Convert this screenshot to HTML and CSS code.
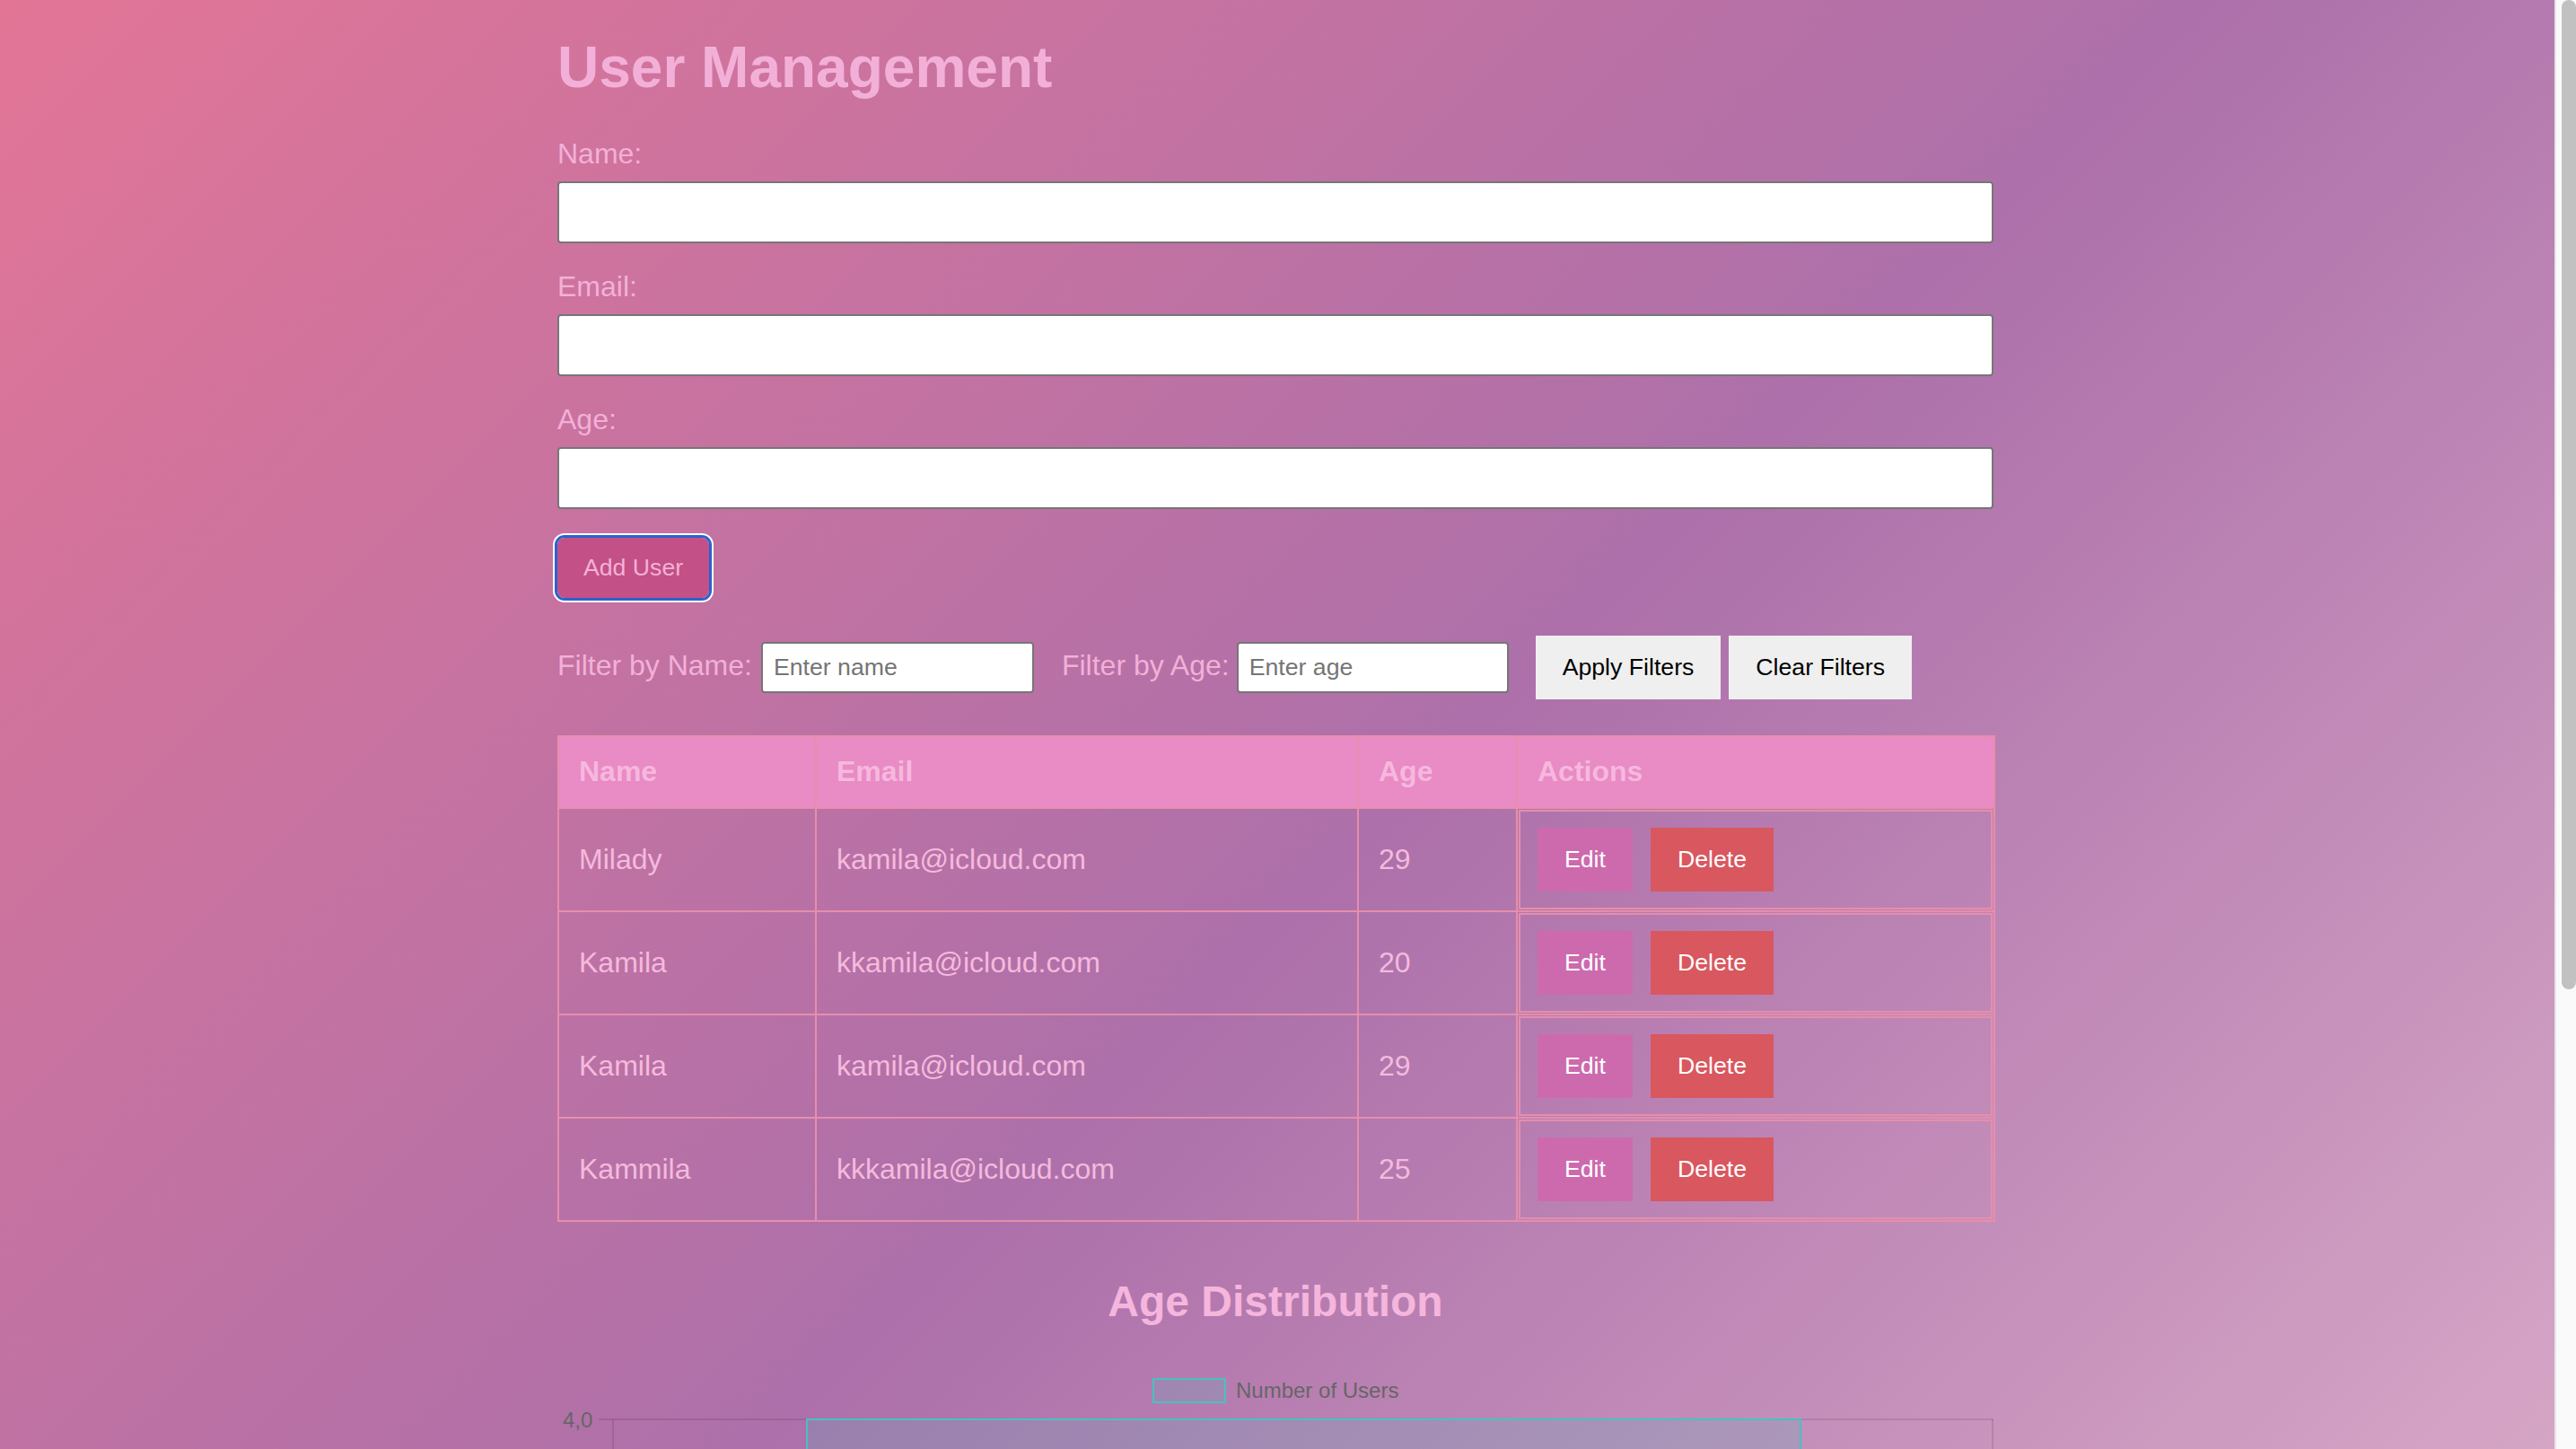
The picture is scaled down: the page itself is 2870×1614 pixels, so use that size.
FILE: index.html
```html
<!DOCTYPE html>
<html lang="en">
<head>
<meta charset="utf-8">
<title>User Management</title>
<link rel="stylesheet" href="styles.css">
</head>
<body>
<div class="container">
  <h1 class="title">User Management</h1>

  <form class="user-form">
    <div class="field">
      <label class="field-label" for="name">Name:</label>
      <input class="field-input" id="name" type="text">
    </div>
    <div class="field">
      <label class="field-label" for="email">Email:</label>
      <input class="field-input" id="email" type="email">
    </div>
    <div class="field">
      <label class="field-label" for="age">Age:</label>
      <input class="field-input" id="age" type="number">
    </div>
    <button type="button" class="add-btn">Add User</button>
  </form>

  <div class="filters">
    <label class="filter-label filter-label-name" for="fname">Filter by Name:</label>
    <input class="filter-input filter-input-name" id="fname" type="text" placeholder="Enter name">
    <label class="filter-label filter-label-age" for="fage">Filter by Age:</label>
    <input class="filter-input filter-input-age" id="fage" type="number" placeholder="Enter age">
    <button type="button" class="light-btn apply-btn">Apply Filters</button>
    <button type="button" class="light-btn">Clear Filters</button>
  </div>

  <table class="users">
    <colgroup>
      <col class="col-name">
      <col class="col-email">
      <col class="col-age">
      <col class="col-actions">
    </colgroup>
    <thead>
      <tr><th>Name</th><th>Email</th><th>Age</th><th>Actions</th></tr>
    </thead>
    <tbody>
      <tr>
        <td>Milady</td><td>kamila@icloud.com</td><td>29</td>
        <td class="actions"><div class="actions-box"><button type="button" class="edit-btn">Edit</button><button type="button" class="delete-btn">Delete</button></div></td>
      </tr>
      <tr>
        <td>Kamila</td><td>kkamila@icloud.com</td><td>20</td>
        <td class="actions"><div class="actions-box"><button type="button" class="edit-btn">Edit</button><button type="button" class="delete-btn">Delete</button></div></td>
      </tr>
      <tr>
        <td>Kamila</td><td>kamila@icloud.com</td><td>29</td>
        <td class="actions"><div class="actions-box"><button type="button" class="edit-btn">Edit</button><button type="button" class="delete-btn">Delete</button></div></td>
      </tr>
      <tr>
        <td>Kammila</td><td>kkkamila@icloud.com</td><td>25</td>
        <td class="actions"><div class="actions-box"><button type="button" class="edit-btn">Edit</button><button type="button" class="delete-btn">Delete</button></div></td>
      </tr>
    </tbody>
  </table>

  <h2 class="chart-title">Age Distribution</h2>

  <div class="chart">
    <svg class="chart-svg" width="1600" height="800" viewBox="0 0 1600 800">
      <rect x="664" y="37" width="80" height="26" fill="rgba(75,192,192,0.2)" stroke="rgb(75,192,192)" stroke-width="2"/>
      <text class="chart-text" x="756" y="58">Number of Users</text>

      <g stroke="rgba(0,0,0,0.1)" stroke-width="2">
        <line x1="46" y1="82" x2="1600" y2="82"/>
        <line x1="46" y1="164.25" x2="1600" y2="164.25"/>
        <line x1="46" y1="246.5" x2="1600" y2="246.5"/>
        <line x1="46" y1="328.75" x2="1600" y2="328.75"/>
        <line x1="46" y1="411" x2="1600" y2="411"/>
        <line x1="46" y1="493.25" x2="1600" y2="493.25"/>
        <line x1="46" y1="575.5" x2="1600" y2="575.5"/>
        <line x1="46" y1="657.75" x2="1600" y2="657.75"/>
        <line x1="46" y1="740" x2="1600" y2="740"/>
        <line x1="62" y1="82" x2="62" y2="756"/>
        <line x1="1599" y1="82" x2="1599" y2="756"/>
      </g>

      <text class="chart-text" x="6" y="91">4,0</text>

      <rect x="278" y="82" width="1107" height="658" fill="rgba(75,192,192,0.2)"/>
      <path d="M278 740 V82 H1385 V740" fill="none" stroke="rgb(75,192,192)" stroke-width="2"/>
    </svg>
  </div>
</div>

<div class="scrollbar" aria-hidden="true"><div class="scrollbar-thumb"></div></div>
</body>
</html>
```

FILE: styles.css
```css
* {
  box-sizing: border-box;
}

html {
  margin: 0;
}

body {
  margin: 0;
  padding: 0 28px 0 0;
  min-height: 100vh;
  font-family: "Liberation Sans", Arial, Helvetica, sans-serif;
  background: linear-gradient(135deg, #e27596 0%, #ad70aa 55%, #d6a6c6 100%) fixed;
}

.container {
  width: 1600px;
  margin: 0 auto;
  padding: 38px 0 64px;
}

.title {
  margin: 0 0 41px;
  font-size: 64px;
  line-height: 74px;
  font-weight: bold;
  color: #f2b0d8;
}

.user-form {
  display: flex;
  flex-direction: column;
  align-items: flex-start;
}

.field {
  width: 100%;
  margin-bottom: 30px;
}

.field-label {
  display: block;
  margin-bottom: 12px;
  font-size: 32px;
  line-height: 37px;
  color: #f2b0d8;
}

.field-input {
  display: block;
  width: 100%;
  height: 69px;
  padding: 0 16px;
  border: 2px solid #767676;
  border-radius: 4px;
  background: #fff;
  font-family: inherit;
  font-size: 26.67px;
}

.add-btn {
  margin-top: 2px;
  padding: 18px 29px;
  border: none;
  border-radius: 8px;
  background: #c35087;
  color: #f4b1d6;
  font-family: inherit;
  font-size: 26.67px;
  line-height: 31px;
  outline: 3px solid #2a62cd;
  outline-offset: 0;
  box-shadow: 0 0 0 5px #ffffff;
}

.filters {
  display: flex;
  align-items: baseline;
  margin-top: 42px;
}

.filter-label {
  font-size: 32px;
  line-height: 37px;
  color: #f2b0d8;
}

.filter-label-name {
  margin-right: 10px;
}

.filter-label-age {
  margin-right: 8px;
}

.filter-input {
  height: 57px;
  padding: 0 12px;
  border: 2px solid #767676;
  border-radius: 4px;
  background: #fff;
  font-family: inherit;
  font-size: 26.67px;
  color: #000;
}

.filter-input::placeholder {
  color: #757575;
}

.filter-input-name {
  width: 304px;
  margin-right: 31px;
}

.filter-input-age {
  width: 303px;
  margin-right: 30px;
}

.light-btn {
  padding: 20px 30px;
  border: none;
  background: #efefef;
  color: #000;
  font-family: inherit;
  font-size: 26.67px;
  line-height: 31px;
}

.apply-btn {
  margin-right: 9px;
}

.users {
  width: 1600px;
  margin-top: 40px;
  border-collapse: collapse;
  table-layout: fixed;
}

.col-name { width: 287px; }
.col-email { width: 604px; }
.col-age { width: 177px; }
.col-actions { width: 532px; }

.users th,
.users td {
  border: 2px solid #e68eab;
  text-align: left;
  vertical-align: middle;
  font-size: 32px;
  line-height: 37px;
}

.users th {
  padding: 20px 22px 21px;
  background: #e98bc4;
  color: #f6b8de;
  font-weight: bold;
}

.users td {
  padding: 0 22px;
  color: #f4badd;
}

.users td.actions {
  padding: 1px;
}

.actions-box {
  display: flex;
  gap: 20px;
  padding: 18px 19px;
  border: 2px solid #e68eab;
}

.edit-btn,
.delete-btn {
  padding: 20px 30px;
  border: none;
  color: #fff;
  font-family: inherit;
  font-size: 26.67px;
  line-height: 31px;
}

.edit-btn {
  background: #cd6aae;
}

.delete-btn {
  background: #d9575f;
}

.chart-title {
  margin: 61px 0 22px;
  font-size: 48px;
  line-height: 55px;
  font-weight: bold;
  text-align: center;
  color: #f5b5dc;
}

.chart {
  width: 1600px;
  height: 800px;
}

.chart-svg {
  display: block;
}

.chart-text {
  font-family: "Liberation Sans", Arial, Helvetica, sans-serif;
  font-size: 24px;
  fill: #666666;
}

.scrollbar {
  position: fixed;
  top: 0;
  right: 0;
  width: 24px;
  height: 100vh;
  padding-left: 6px;
  background: #fafafa;
  border-left: 2px solid #e6e8e6;
}

.scrollbar-thumb {
  width: 16px;
  height: 1102px;
  background: #c1c1c1;
  border-radius: 8px;
}
```
